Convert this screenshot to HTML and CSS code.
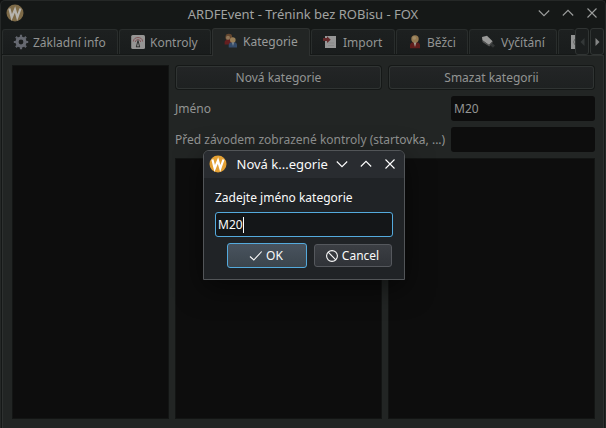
FILE: index.html
```html
<!DOCTYPE html>
<html lang="cs">
<head>
<meta charset="utf-8">
<title>ARDFEvent</title>
<link rel="stylesheet" href="styles.css">
</head>
<body>
<div class="window">
  <header class="titlebar">
    <svg class="logo" viewBox="0 0 18 18"><circle cx="9" cy="9" r="8.5" fill="#7e6b48"/><path d="M3.4 4.5 5.7 13.5 9 5.5 11.3 13.5 14.5 4.5" fill="none" stroke="#b6b4ae" stroke-width="2.2"/></svg>
    <h1>ARDFEvent - Trénink bez ROBisu - FOX</h1>
    <div class="controls">
      <svg viewBox="0 0 12 12"><path d="M.8 3.5 6 8.7 11.2 3.5"/></svg>
      <svg viewBox="0 0 12 12"><path d="M.8 8.5 6 3.3 11.2 8.5"/></svg>
      <svg viewBox="0 0 12 12"><path d="M1.5 1.5 10.5 10.5M10.5 1.5 1.5 10.5"/></svg>
    </div>
  </header>
  <nav class="tabs">
    <div class="tab t1"><svg viewBox="0 0 16 16"><circle cx="8" cy="8" r="4" fill="none" stroke="#666971" stroke-width="3.2"/><path d="M8 .8V3M8 13v2.2M.8 8H3M13 8h2.2M2.9 2.9 4.5 4.5M11.5 11.5l1.6 1.6M13.1 2.9 11.5 4.5M4.5 11.5 2.9 13.1" stroke="#62656d" stroke-width="2.2"/></svg><span>Základní info</span></div>
    <div class="tab t2"><svg viewBox="0 0 16 16"><rect x="1.2" y="1" width="13.8" height="14" rx="1.5" fill="#969594"/><path d="M3.4 7.5C3.4 2.2 12.6 2.2 12.6 7.5M5.4 8C5.4 4.8 10.6 4.8 10.6 8" fill="none" stroke="#825457"/><path d="M8 6.5 6.3 13M8 6.5 9.7 13M6 12.8h4" fill="none" stroke="#303130"/></svg><span>Kontroly</span></div>
    <div class="tab t3 selected"><svg viewBox="0 0 16 16"><circle cx="5.8" cy="4.2" r="3.4" fill="#65472f"/><path d="M1.6 11.5V9Q2 6.5 5.5 6.5T9 11.5Z" fill="#641f20"/><circle cx="5" cy="4.8" r="2" fill="#8f7659"/><path d="M5.7 14.5V12Q6 9 10 9T14 12v2.5Z" fill="#344b6a"/><circle cx="9.8" cy="7" r="2.8" fill="#9a8058"/><path d="M9 9.5h2L10 13Z" fill="#8a9299"/></svg><span>Kategorie</span></div>
    <div class="tab t4"><svg viewBox="0 0 16 16"><path d="M3 2h11v12H3Z" fill="#969696"/><path d="M6 9h6M6 11.5h6" stroke="#898989"/><path d="M1 4h4V2.2L8.7 5.7 5 9V7H1Z" fill="#642a2b"/></svg><span>Import</span></div>
    <div class="tab t5"><svg viewBox="0 0 16 16"><path d="M3 14.2V11Q3.5 8 8 8t5 3v3.2Z" fill="#601d1c"/><path d="M6.2 7h3.6L8 13Z" fill="#a39c92"/><circle cx="8" cy="5" r="3.7" fill="#947951"/><circle cx="7.3" cy="4" r="1.8" fill="#a18b66"/></svg><span>Běžci</span></div>
    <div class="tab t6"><svg viewBox="0 0 16 16"><path d="M2 3 7 1.7 12.6 7.2 9 11 2.4 6.3Z" fill="#999998"/><path d="M2.4 6.3 9 11 12.4 7.3v2L9.2 12.4 2.5 8Z" fill="#555655"/><path d="m11 10 3 2.7" stroke="#343737" stroke-width="3"/></svg><span>Vyčítání</span></div>
    <div class="tab t7"><svg viewBox="0 0 5 16"><path d="M1 1h4v14H1Z" fill="#929393"/><path d="M5 5Q2 8 5 11" fill="none" stroke="#656666"/></svg></div>
    <div class="scroll"><svg viewBox="0 0 5 8"><path d="M4.5 0 .5 4 4.5 8Z" fill="#343838"/></svg></div>
    <div class="scroll"><svg viewBox="0 0 5 8"><path d="M.5 0 4.5 4 .5 8Z" fill="#858686"/></svg></div>
  </nav>
  <main class="pane">
    <div class="list"></div>
    <section class="details">
      <div class="pair buttons"><div class="button">Nová kategorie</div><div class="button">Smazat kategorii</div></div>
      <div class="field"><label>Jméno</label><div class="input">M20</div></div>
      <div class="field"><label>Před závodem zobrazené kontroly (startovka, ...)</label><div class="input"></div></div>
      <div class="pair lists"><div class="list"></div><div class="list"></div></div>
    </section>
  </main>
</div>
<div class="dialog">
  <header class="dialog-title">
    <svg class="logo" viewBox="0 0 18 18"><circle cx="9" cy="9" r="8.5" fill="#e3a034"/><path d="M3.4 4.5 5.7 13.5 9 5.5 11.3 13.5 14.5 4.5" fill="none" stroke="#fff" stroke-width="2.2"/></svg>
    <h2>Nová k...egorie</h2>
    <div class="controls">
      <svg viewBox="0 0 12 12"><path d="M.8 3.5 6 8.7 11.2 3.5"/></svg>
      <svg viewBox="0 0 12 12"><path d="M.8 8.5 6 3.3 11.2 8.5"/></svg>
      <svg viewBox="0 0 12 12"><path d="M1.5 1.5 10.5 10.5M10.5 1.5 1.5 10.5"/></svg>
    </div>
  </header>
  <div class="dialog-body">
    <p>Zadejte jméno kategorie</p>
    <div class="entry">M20<i class="caret"></i></div>
    <div class="actions">
      <div class="action ok"><svg viewBox="0 0 14 14"><path d="M1 7.5 4.8 11 12.7 2.5"/></svg>OK</div>
      <div class="action"><svg viewBox="0 0 14 14"><circle cx="7" cy="7" r="5.4"/><path d="m3.2 3.2 7.6 7.6"/></svg>Cancel</div>
    </div>
  </div>
</div>
</body>
</html>
```
FILE: styles.css
```css
* { box-sizing: border-box; }
body { margin: 0; width: 606px; height: 428px; overflow: hidden; background: #101211; font: 12px/18px "Noto Sans", sans-serif; color: #929493; white-space: nowrap; }
svg { display: block; flex: none; }
h1, h2, p { margin: 0; font-weight: 400; }
.window { width: 606px; height: 428px; display: flex; flex-direction: column; border: 1px solid #252827; border-bottom: 0; border-radius: 5px 5px 0 0; background: #151817; }
.titlebar { height: 27px; flex: none; display: grid; grid-template-columns: 100px 1fr 100px; align-items: center; padding: 0 7px 3px 5px; }
h1 { text-align: center; font-size: 13px; color: #a1a3a2; padding: 1px 0 0 2px; }
.logo { width: 18px; height: 18px; }
.controls { display: flex; gap: 12px; justify-content: flex-end; }
.controls svg { width: 12px; height: 12px; fill: none; stroke: #9c9e9d; stroke-width: 1.1; }
.tabs { height: 27px; flex: none; display: flex; align-items: flex-end; padding-left: 1px; }
.tab { height: 25px; flex: none; margin: 0 1px 1px 0; display: flex; align-items: center; gap: 4px; padding-left: 10px; background: linear-gradient(#1d2020, #191c1c); border: 1px solid #292d2c; border-bottom: 0; border-radius: 3px 3px 0 0; }
.tab svg { width: 16px; height: 16px; }
.tab span { padding-top: 1px; }
.t1 { width: 116px; }
.t2 { width: 92px; }
.t3 { width: 98px; }
.t4 { width: 84px; gap: 5px; }
.t5 { width: 72px; }
.t6 { width: 88px; gap: 5px; }
.t7 { width: 17px; margin-right: 0; border-right: 0; padding-left: 11px; }
.t7 svg { width: 5px; }
.tab.selected { height: 28px; margin: 0 1px -1px 0; padding-bottom: 3px; background: #222524; border-color: #2e3130; color: #999b9a; position: relative; }
.scroll { height: 27px; width: 14px; margin-right: 1px; flex: none; display: grid; place-items: center; border: 1px solid #303433; border-radius: 3px; background: #1b1e1e; }
.scroll svg { width: 5px; height: 8px; }
.pane { flex: 1; margin: 0 1px 1px; border: 1px solid #2e3130; background: #222524; display: grid; grid-template-columns: 157px 420px; gap: 6px; padding: 9px; }
.pane > .list { height: 354px; }
.list { background: #0d0d0d; border: 1px solid #131514; }
.details { display: flex; flex-direction: column; gap: 6px; }
.pair { display: grid; grid-template-columns: 207px 207px; gap: 6px; }
.buttons { height: 25px; }
.button { text-align: center; line-height: 21px; border: 1px solid #303433; border-radius: 3px; background: linear-gradient(#232526, #1e2121); box-shadow: 0 0 0 1px #151817; height: 23px; margin: 1px; }
.field { height: 25px; display: grid; grid-template-columns: 1fr 144px; gap: 6px; align-items: center; }
.input { height: 25px; line-height: 25px; padding-left: 3px; background: #0d0d0d; border-radius: 3px; }
.lists { height: 261px; }
.dialog { position: absolute; left: 203px; top: 150px; width: 202px; height: 130px; border: 1px solid #525558; border-radius: 6px 6px 0 0; background: #202326; color: #fafafa; overflow: hidden; box-shadow: 0 8px 28px #0008; }
.dialog-title { height: 27px; background: #292c30; display: flex; align-items: center; justify-content: space-between; padding: 0 8px 2px 5px; }
.dialog-title h2 { width: 92px; font-size: 13px; margin-left: 2px; }
.dialog .controls svg { stroke: #fff; }
.dialog-body { padding: 11px; }
.dialog-body p { height: 18px; line-height: 18px; }
.entry { height: 25px; margin-top: 5px; border: 1px solid #54aadd; border-radius: 3px; background: #141618; display: flex; align-items: center; padding-left: 2px; }
.caret { width: 1px; height: 16px; background: #fff; }
.actions { display: flex; justify-content: flex-end; align-items: center; gap: 7px; height: 25px; margin-top: 6px; padding-right: 1px; }
.action { width: 78px; height: 23px; border: 1px solid #55585d; border-radius: 3px; display: flex; align-items: center; justify-content: center; gap: 3px; padding-right: 2px; background: linear-gradient(#3b3e43, #303338); }
.action.ok { width: 80px; height: 25px; border-color: #54aadd; background: linear-gradient(#49535e, #3b454d); }
.action svg { width: 14px; height: 14px; fill: none; stroke: #fafafa; stroke-width: 1.1; }
```
